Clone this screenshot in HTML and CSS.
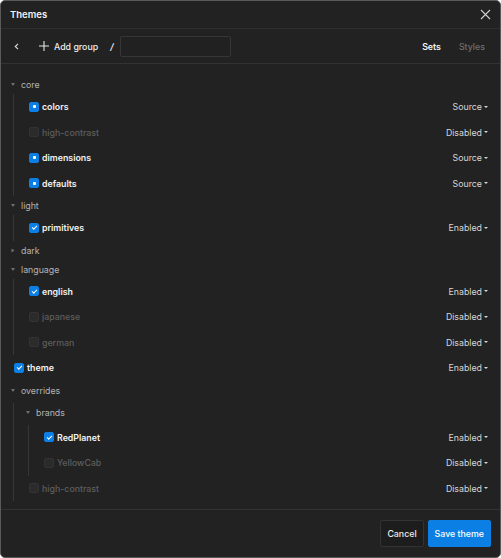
FILE: index.html
```html
<!DOCTYPE html>
<html lang="en">
<head>
<meta charset="UTF-8">
<meta name="viewport" content="width=device-width, initial-scale=1.0">
<title>Themes</title>
<link rel="stylesheet" href="styles.css">
</head>
<body>

<div class="modal">
    <header class="modal-head">
        <span class="title">Themes</span>
        <button class="close" aria-label="Close">
            <svg width="11" height="11" viewBox="0 0 11 11"><path d="M1 1L10 10M10 1L1 10" stroke="#cfcfcf" stroke-width="1.1" fill="none"/></svg>
        </button>
    </header>

    <div class="toolbar">
        <button class="back" aria-label="Back">
            <svg width="5" height="7" viewBox="0 0 5 7"><path d="M4 0.8L1.3 3.5L4 6.2" stroke="#d8d8d8" stroke-width="1.2" fill="none"/></svg>
        </button>
        <button class="add">
            <svg width="10" height="10" viewBox="0 0 10 10"><path d="M5 0V10M0 5H10" stroke="#e6e6e6" stroke-width="1.1" fill="none"/></svg>
            <span>Add group</span>
        </button>
        <span class="slash">/</span>
        <input class="group-name" type="text">
        <div class="tabs">
            <span class="tab active">Sets</span>
            <span class="tab">Styles</span>
        </div>
    </div>

    <div class="tree">
        <div class="group">
            <div class="group-head"><span class="caret open"></span>core</div>
            <div class="group-body">
                <div class="set-row"><span class="check source"></span><span class="name">colors</span><span class="mode">Source</span></div>
                <div class="set-row off"><span class="check"></span><span class="name">high-contrast</span><span class="mode">Disabled</span></div>
                <div class="set-row"><span class="check source"></span><span class="name">dimensions</span><span class="mode">Source</span></div>
                <div class="set-row"><span class="check source"></span><span class="name">defaults</span><span class="mode">Source</span></div>
            </div>
        </div>
        <div class="group">
            <div class="group-head"><span class="caret open"></span>light</div>
            <div class="group-body">
                <div class="set-row"><span class="check on"></span><span class="name">primitives</span><span class="mode">Enabled</span></div>
            </div>
        </div>
        <div class="group">
            <div class="group-head"><span class="caret"></span>dark</div>
        </div>
        <div class="group">
            <div class="group-head"><span class="caret open"></span>language</div>
            <div class="group-body">
                <div class="set-row"><span class="check on"></span><span class="name">english</span><span class="mode">Enabled</span></div>
                <div class="set-row off"><span class="check"></span><span class="name">japanese</span><span class="mode">Disabled</span></div>
                <div class="set-row off"><span class="check"></span><span class="name">german</span><span class="mode">Disabled</span></div>
            </div>
        </div>
        <div class="set-row"><span class="check on"></span><span class="name">theme</span><span class="mode">Enabled</span></div>
        <div class="group">
            <div class="group-head"><span class="caret open"></span>overrides</div>
            <div class="group-body">
                <div class="group nested">
                    <div class="group-head"><span class="caret open"></span>brands</div>
                    <div class="group-body">
                        <div class="set-row"><span class="check on"></span><span class="name">RedPlanet</span><span class="mode">Enabled</span></div>
                        <div class="set-row off"><span class="check"></span><span class="name">YellowCab</span><span class="mode">Disabled</span></div>
                    </div>
                </div>
                <div class="set-row off"><span class="check"></span><span class="name">high-contrast</span><span class="mode">Disabled</span></div>
            </div>
        </div>
    </div>

    <footer class="modal-foot">
        <button class="btn">Cancel</button>
        <button class="btn primary">Save theme</button>
    </footer>
</div>

</body>
</html>
```

FILE: styles.css
```css
* {
    box-sizing: border-box;
}
body {
    margin: 0;
    padding: 0;
    background: #ffffff;
    font-family: Inter, "Noto Sans", sans-serif;
    font-size: 8.8px;
    color: #e8e8e8;
}
button {
    font-family: inherit;
    font-size: inherit;
    color: inherit;
    background: none;
    border: none;
    padding: 0;
    cursor: pointer;
}
.modal {
    width: 501px;
    height: 558px;
    background: #222222;
    border: 1px solid #5a5a5a;
    border-radius: 5px;
    display: flex;
    flex-direction: column;
    overflow: hidden;
}
.modal-head {
    height: 28px;
    flex-shrink: 0;
    display: flex;
    align-items: center;
    justify-content: space-between;
    padding: 0 8px 0 9px;
    border-bottom: 1px solid #2e2e2e;
}
.title {
    font-size: 9.5px;
    font-weight: 600;
    color: #f2f2f2;
}
.close {
    display: flex;
    width: 14px;
    height: 14px;
    align-items: center;
    justify-content: center;
}
.toolbar {
    height: 35px;
    flex-shrink: 0;
    display: flex;
    align-items: center;
    padding: 0 15px 0 13px;
    border-bottom: 1px solid #333333;
}
.back {
    display: flex;
    width: 8px;
    height: 10px;
    align-items: center;
}
.add {
    display: flex;
    align-items: center;
    gap: 5px;
    margin-left: 17px;
    font-weight: 500;
    color: #ececec;
}
.slash {
    margin-left: 12px;
    font-weight: 600;
    font-style: italic;
    color: #f0f0f0;
}
.group-name {
    margin-left: 7px;
    width: 111px;
    height: 21px;
    background: #212121;
    border: 1px solid #363636;
    border-radius: 2px;
    outline: none;
    color: #eee;
}
.tabs {
    margin-left: auto;
    display: flex;
    gap: 18px;
}
.tab {
    font-weight: 500;
    color: #6f6f6f;
}
.tab.active {
    font-weight: 600;
    color: #f4f4f4;
}
.tree {
    flex: 1;
    padding: 11px 12px 0 13px;
    overflow: hidden;
}
.group-head {
    height: 19px;
    display: flex;
    align-items: center;
    margin-left: -5px;
    color: #b4b4b4;
}
.caret {
    width: 7px;
    height: 7px;
    margin-right: 5px;
    display: flex;
    align-items: center;
    justify-content: center;
}
.caret::before {
    content: "";
    border-left: 2.5px solid transparent;
    border-right: 2.5px solid transparent;
    border-top: 3px solid #707070;
    transform: rotate(-90deg);
}
.caret.open::before {
    transform: none;
}
.group-body {
    margin-left: -1px;
    border-left: 1px solid #363636;
    padding-left: 15px;
}
.nested {
    margin-top: 3px;
}
.nested > .group-body {
    margin-top: 3px;
}
.set-row {
    height: 25.5px;
    display: flex;
    align-items: center;
}
.check {
    width: 10px;
    height: 10px;
    border-radius: 2px;
    margin-right: 3px;
    background: #2b2b2b;
    border: 1px solid #333333;
    display: flex;
    align-items: center;
    justify-content: center;
}
.check.on,
.check.source {
    background: #0c7fe4;
    border-color: #0c7fe4;
}
.check.on::before {
    content: "";
    width: 4px;
    height: 2px;
    border-left: 1.2px solid #fff;
    border-bottom: 1.2px solid #fff;
    transform: translateY(-0.5px) rotate(-45deg);
}
.check.source::before {
    content: "";
    width: 3px;
    height: 3px;
    border-radius: 1px;
    background: #fff;
}
.name {
    font-weight: 600;
    color: #f2f2f2;
}
.off .name {
    font-weight: 500;
    color: #5e5e5e;
}
.mode {
    margin-left: auto;
    display: flex;
    align-items: center;
    color: #d6d6d6;
}
.mode::after {
    content: "";
    margin-left: 2px;
    border-left: 2px solid transparent;
    border-right: 2px solid transparent;
    border-top: 2.5px solid #d6d6d6;
}
.modal-foot {
    height: 48px;
    flex-shrink: 0;
    display: flex;
    align-items: center;
    justify-content: flex-end;
    gap: 4px;
    padding: 0 9px 1px 0;
    border-top: 1px solid #333333;
}
.btn {
    height: 27px;
    padding: 0 6px;
    border-radius: 2px;
    border: 1px solid #333333;
    background: #1d1d1d;
    font-weight: 500;
    color: #ececec;
}
.btn.primary {
    background: #0c7fe4;
    border-color: #0c7fe4;
    color: #ffffff;
}
```
